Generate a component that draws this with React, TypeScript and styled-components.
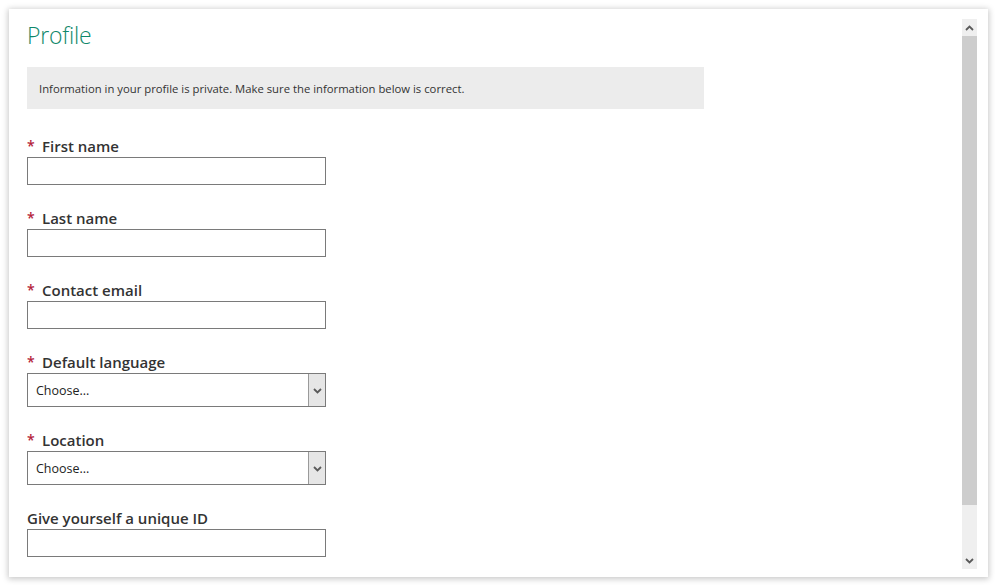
import { createGlobalStyle, styled } from "styled-components"

const GlobalStyle = createGlobalStyle`
  html, body {
    margin: 0;
    padding: 0;
    background: #ffffff;
  }
  body {
    font-family: "Open Sans", "Noto Sans", "Liberation Sans", sans-serif;
    color: #333333;
  }
`

type FieldDef = {
  label: string
  required: boolean
  kind: "text" | "select"
}

const fields: FieldDef[] = [
  { label: "First name", required: true, kind: "text" },
  { label: "Last name", required: true, kind: "text" },
  { label: "Contact email", required: true, kind: "text" },
  { label: "Default language", required: true, kind: "select" },
  { label: "Location", required: true, kind: "select" },
  { label: "Give yourself a unique ID", required: false, kind: "text" },
]

function Chevron({ up }: { up?: boolean }) {
  return (
    <svg width="9" height="6" viewBox="0 0 9 6">
      <path
        d={up ? "M1 5 L4.5 1.5 L8 5" : "M1 1 L4.5 4.5 L8 1"}
        fill="none"
        stroke="#5a5a5a"
        strokeWidth="1.8"
      />
    </svg>
  )
}

export default function App() {
  return (
    <>
      <GlobalStyle />
      <Page>
        <Panel>
          <Content>
            <Title>Profile</Title>
            <Notice>
              Information in your profile is private. Make sure the information
              below is correct.
            </Notice>
            <Form>
              {fields.map((f) => (
                <Field key={f.label}>
                  <Label>
                    {f.required && <Star>*</Star>}
                    {f.label}
                  </Label>
                  {f.kind === "text" ? (
                    <TextInput type="text" />
                  ) : (
                    <SelectBox>
                      <SelectValue>Choose...</SelectValue>
                      <SelectButton>
                        <Chevron />
                      </SelectButton>
                    </SelectBox>
                  )}
                </Field>
              ))}
            </Form>
          </Content>
          <Scrollbar>
            <ScrollArrow>
              <Chevron up />
            </ScrollArrow>
            <Thumb />
            <Track />
            <ScrollArrow>
              <Chevron />
            </ScrollArrow>
          </Scrollbar>
        </Panel>
      </Page>
    </>
  )
}

const Page = styled.div`
  width: 995px;
  height: 585px;
  padding: 9px 7px 8px 9px;
  box-sizing: border-box;
  background: #ffffff;
`

const Panel = styled.div`
  height: 100%;
  display: flex;
  background: #ffffff;
  box-shadow: 0 1px 6px 1px rgba(0, 0, 0, 0.22);
  overflow: hidden;
`

const Content = styled.div`
  flex: 1;
  padding: 10px 0 0 18px;
  overflow: hidden;
`

const Title = styled.h1`
  margin: 0;
  font-size: 23px;
  line-height: 33px;
  font-weight: 300;
  color: #0f876a;
  letter-spacing: -0.2px;
`

const Notice = styled.div`
  margin-top: 15px;
  width: 677px;
  height: 42px;
  box-sizing: border-box;
  padding: 0 12px;
  display: flex;
  align-items: center;
  background: #ececec;
  font-size: 11.3px;
  color: #333333;
`

const Form = styled.div`
  margin-top: 27px;
  display: flex;
  flex-direction: column;
  gap: 23px;
`

const Field = styled.div`
  display: flex;
  flex-direction: column;
`

const Label = styled.label`
  height: 21px;
  font-size: 15px;
  font-weight: 600;
  line-height: 20px;
  color: #333333;
  display: flex;
  align-items: flex-start;
`

const Star = styled.span`
  color: #b4233a;
  font-weight: 600;
  width: 15px;
  font-size: 14px;
`

const TextInput = styled.input`
  width: 299px;
  height: 28px;
  box-sizing: border-box;
  border: 1px solid #7a7a7a;
  margin: 0;
  padding: 0 8px;
  background: #ffffff;
  font: inherit;
  outline: none;
`

const SelectBox = styled.div`
  width: 299px;
  height: 34px;
  box-sizing: border-box;
  border: 1px solid #7a7a7a;
  display: flex;
  background: #ffffff;
`

const SelectValue = styled.div`
  flex: 1;
  display: flex;
  align-items: center;
  padding-left: 8px;
  font-size: 12.5px;
  color: #222222;
`

const SelectButton = styled.div`
  width: 17px;
  border-left: 1px solid #9a9a9a;
  background: #e6e6e6;
  display: flex;
  align-items: center;
  justify-content: center;
  padding-top: 2px;
  box-sizing: border-box;
`

const Scrollbar = styled.div`
  width: 15px;
  margin: 10px 11px 8px 0;
  display: flex;
  flex-direction: column;
  background: #efefef;
`

const ScrollArrow = styled.div`
  height: 17px;
  display: flex;
  align-items: center;
  justify-content: center;
  background: #efefef;
`

const Thumb = styled.div`
  height: 469px;
  background: #cdcdcd;
`

const Track = styled.div`
  flex: 1;
  background: #efefef;
`
